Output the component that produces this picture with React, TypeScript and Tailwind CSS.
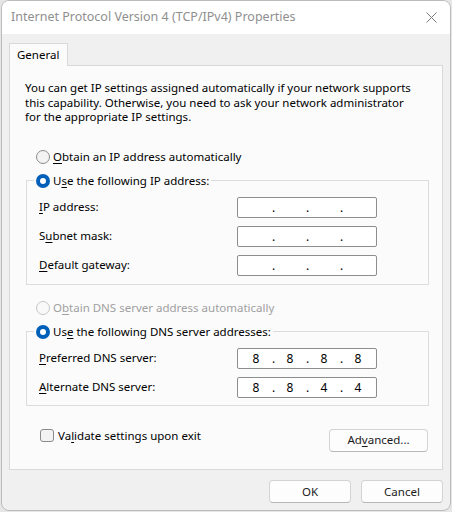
import type { ReactNode } from "react";

const FONT = { fontFamily: '"Noto Sans", "Open Sans", sans-serif' };

function Key({ children }: { children: ReactNode }) {
  return <span className="underline underline-offset-[2px] decoration-[1px]">{children}</span>;
}

function Radio({ checked, disabled }: { checked?: boolean; disabled?: boolean }) {
  if (checked) {
    return (
      <span className="flex h-[14px] w-[14px] shrink-0 items-center justify-center rounded-full bg-[#005fb8]">
        <span className="h-[6px] w-[6px] rounded-full bg-white" />
      </span>
    );
  }
  return (
    <span
      className={
        disabled
          ? "h-[14px] w-[14px] shrink-0 rounded-full border border-[#c6c6c6] bg-[#f9f9f9]"
          : "h-[14px] w-[14px] shrink-0 rounded-full border border-[#8a8a8a] bg-[#f3f3f3]"
      }
    />
  );
}

function IpBox({ parts }: { parts?: string[] }) {
  const p = parts ?? ["", "", "", ""];
  return (
    <div className="flex h-[21px] w-[140px] items-center rounded-[2px] border border-[#8d8d8d] bg-white pl-[2px] text-[12px] leading-[19px] text-black">
      <span className="w-[32px] text-center">{p[0]}</span>
      <span className="w-[2px] text-center">.</span>
      <span className="w-[32px] text-center">{p[1]}</span>
      <span className="w-[2px] text-center">.</span>
      <span className="w-[32px] text-center">{p[2]}</span>
      <span className="w-[2px] text-center">.</span>
      <span className="w-[32px] text-center">{p[3]}</span>
    </div>
  );
}

function Row({ label, parts }: { label: ReactNode; parts?: string[] }) {
  return (
    <div className="flex items-center justify-between">
      <span>{label}</span>
      <IpBox parts={parts} />
    </div>
  );
}

function Button({ children, className }: { children: ReactNode; className?: string }) {
  return (
    <button
      className={
        "flex h-[23px] items-center justify-center rounded-[4px] border border-[#d3d3d3] border-b-[#b8b8b8] bg-[#fdfdfd] text-[11.5px] text-[#1b1b1b] " +
        (className ?? "")
      }
    >
      {children}
    </button>
  );
}

export default function App() {
  return (
    <div className="h-[512px] w-[452px] bg-[#e6e6e6] pl-px" style={FONT}>
      <div className="flex h-[511px] w-[450px] flex-col overflow-hidden rounded-[8px] border border-[#bcbcbc] bg-[#f0f0f0] text-[11.5px] text-black">
        {/* title bar */}
        <div className="flex h-[33px] shrink-0 items-center justify-between bg-white pl-[9px] pr-[13px]">
          <span className="text-[12.5px] text-[#8f8f8f]">Internet Protocol Version 4 (TCP/IPv4) Properties</span>
          <svg width="11" height="11" viewBox="0 0 11 11" fill="none" stroke="#7a7a7a" strokeWidth="1">
            <path d="M0.5 0.5 L10.5 10.5 M10.5 0.5 L0.5 10.5" />
          </svg>
        </div>

        <div className="flex flex-col pl-[7px] pr-[7px]">
          {/* tab */}
          <div className="mt-[9px] flex">
            <div className="relative z-10 -mb-px flex h-[23px] w-[59px] items-center border border-b-0 border-[#d9d9d9] bg-[#fbfbfb] pl-[7px]">
              General
            </div>
          </div>

          {/* panel */}
          <div className="flex h-[405px] flex-col border border-[#d9d9d9] bg-[#fbfbfb]">
            <div className="ml-[15px] mt-[15px] flex flex-col whitespace-nowrap leading-[14.5px]">
              <span>You can get IP settings assigned automatically if your network supports</span>
              <span>this capability. Otherwise, you need to ask your network administrator</span>
              <span>for the appropriate IP settings.</span>
            </div>

            <div className="ml-[26px] mt-[24px] flex h-[16px] items-center gap-[3px]">
              <Radio />
              <span>
                <Key>O</Key>btain an IP address automatically
              </span>
            </div>

            <fieldset className="ml-[16px] mr-[13px] mt-[8px] border border-[#dcdcdc] pb-[8px] pl-[12px] pr-[51px] pt-[8px]">
              <legend className="-ml-[5px] flex h-[16px] items-center gap-[3px] px-[2px]">
                <Radio checked />
                <span>
                  U<Key>s</Key>e the following IP address:
                </span>
              </legend>
              <div className="flex flex-col gap-[8px]">
                <Row label={<><Key>I</Key>P address:</>} />
                <Row label={<>S<Key>u</Key>bnet mask:</>} />
                <Row label={<><Key>D</Key>efault gateway:</>} />
              </div>
            </fieldset>

            <div className="ml-[26px] mt-[15px] flex h-[16px] items-center gap-[3px] text-[#a0a0a0]">
              <Radio disabled />
              <span>
                O<Key>b</Key>tain DNS server address automatically
              </span>
            </div>

            <fieldset className="ml-[16px] mr-[13px] mt-[8px] border border-[#dcdcdc] pb-[7px] pl-[12px] pr-[51px] pt-[8px]">
              <legend className="-ml-[5px] flex h-[16px] items-center gap-[3px] px-[2px]">
                <Radio checked />
                <span>
                  Us<Key>e</Key> the following DNS server addresses:
                </span>
              </legend>
              <div className="flex flex-col gap-[8px]">
                <Row label={<><Key>P</Key>referred DNS server:</>} parts={["8", "8", "8", "8"]} />
                <Row label={<><Key>A</Key>lternate DNS server:</>} parts={["8", "8", "4", "4"]} />
              </div>
            </fieldset>

            <div className="ml-[30px] mr-[14px] mt-[21px] flex items-start justify-between">
              <div className="flex items-center gap-[4px]">
                <span className="h-[13px] w-[14px] rounded-[3px] border border-[#8a8a8a] bg-[#f3f3f3]" />
                <span>
                  Va<Key>l</Key>idate settings upon exit
                </span>
              </div>
              <Button className="mt-[2px] w-[99px]">
                <span>
                  Ad<Key>v</Key>anced...
                </span>
              </Button>
            </div>
          </div>

          {/* footer */}
          <div className="mt-[10px] flex justify-end gap-[10px]">
            <Button className="w-[82px]">OK</Button>
            <Button className="w-[82px]">Cancel</Button>
          </div>
        </div>
      </div>
    </div>
  );
}
